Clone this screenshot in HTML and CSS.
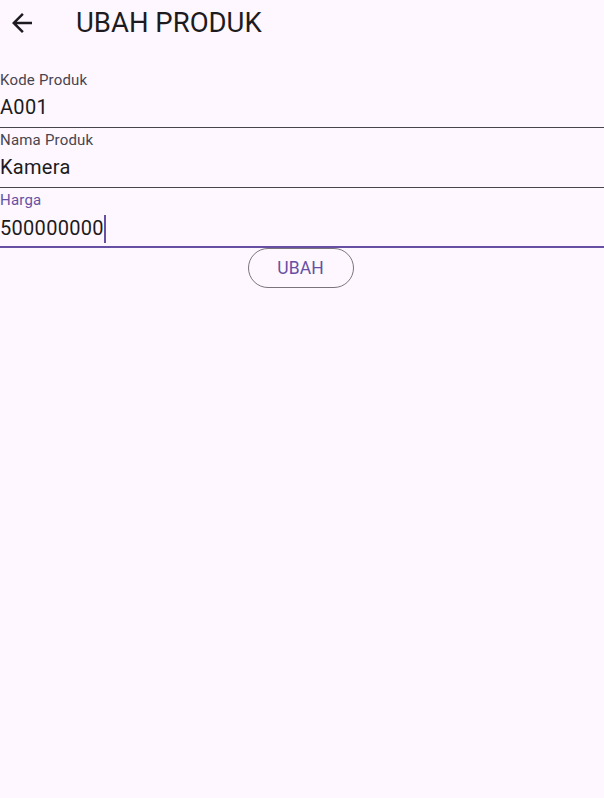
FILE: index.html
```html
<!DOCTYPE html>
<html lang="id">
<head>
<meta charset="utf-8">
<title>UBAH PRODUK</title>
<link rel="stylesheet" href="styles.css">
</head>
<body>
<header class="appbar">
  <span class="back" aria-label="Kembali">
    <svg viewBox="0 0 24 24" width="30" height="30"><path d="M20 11H7.83l5.59-5.59L12 4l-8 8 8 8 1.41-1.41L7.83 13H20v-2z" fill="#1d1b20"/></svg>
  </span>
  <h1 class="title">UBAH PRODUK</h1>
</header>
<main class="form">
  <div class="field">
    <div class="label">Kode Produk</div>
    <div class="value">A001</div>
  </div>
  <div class="field">
    <div class="label">Nama Produk</div>
    <div class="value">Kamera</div>
  </div>
  <div class="field focused">
    <div class="label">Harga</div>
    <div class="value">500000000<span class="caret"></span></div>
  </div>
  <div class="actions">
    <button class="btn" type="button">UBAH</button>
  </div>
</main>
</body>
</html>
```
FILE: styles.css
```css
html, body {
  margin: 0;
  padding: 0;
  background: #fef7ff;
  font-family: Roboto, "Noto Sans", sans-serif;
  color: #1d1b20;
}
.appbar {
  height: 46px;
  margin-bottom: 22px;
  display: flex;
  align-items: center;
  padding-left: 7px;
  box-sizing: border-box;
}
.back {
  width: 30px;
  height: 30px;
  display: flex;
}
.title {
  margin: 0 0 0 39px;
  font-size: 27.5px;
  font-weight: 400;
  line-height: 32px;
  color: #1d1b20;
}
.form {
  display: flex;
  flex-direction: column;
}
.field {
  height: 60px;
  box-sizing: border-box;
  padding-top: 3px;
  border-bottom: 1px solid #49454f;
}
.field.focused {
  border-bottom: 2px solid #6750a4;
}
.label {
  font-size: 15px;
  line-height: 18px;
  color: #49454f;
  letter-spacing: 0.2px;
}
.focused .label {
  color: #6750a4;
}
.value {
  margin-top: 6px;
  font-size: 20px;
  line-height: 24px;
  color: #1d1b20;
  letter-spacing: 0.3px;
  white-space: nowrap;
}
.caret {
  display: inline-block;
  width: 2.5px;
  height: 28px;
  background: #6750a4;
  vertical-align: -8px;
  margin-left: 0;
}
.actions {
  display: flex;
  justify-content: center;
}
.btn {
  width: 106px;
  height: 40px;
  margin-left: -3px;
  border: 1px solid #79747e;
  border-radius: 20px;
  background: transparent;
  color: #6750a4;
  font-family: Roboto, "Noto Sans", sans-serif;
  font-size: 17.5px;
  font-weight: 400;
  letter-spacing: 0.1px;
  padding: 0;
}
```
